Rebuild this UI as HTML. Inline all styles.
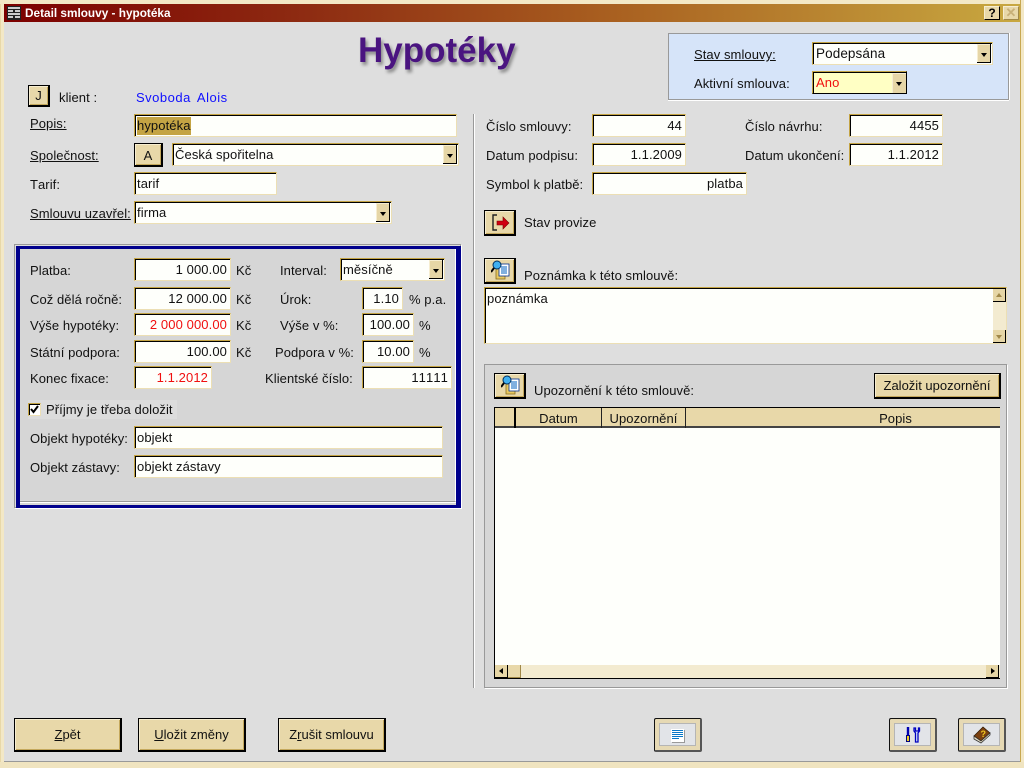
<!DOCTYPE html>
<html lang="cs"><head><meta charset="utf-8"><title>Detail smlouvy - hypotéka</title>
<style>
html,body{margin:0;padding:0;width:1024px;height:768px;overflow:hidden;background:#dedede}
*{box-sizing:border-box}
body{font:13px/16px "Liberation Sans",Arial,sans-serif;color:#111;position:relative;font-kerning:none}
.a,.l,.f,.b,.ib{position:absolute}
.l{white-space:nowrap;height:16px;margin-top:1px;letter-spacing:.07px}
.f{background:#fefffb;border:1px solid;border-color:#c4a444 #ecdfb4 #ecdfb4 #c4a444;box-shadow:inset 1px 1px 0 #000;padding:3px 2px 0 2px;white-space:nowrap;overflow:hidden;line-height:16px;letter-spacing:.1px}
.r{text-align:right;padding-right:3px}
.red{color:#f00f0f}
.b{background:#e8d8a9;border:1px solid #000;border-right-width:2px;border-bottom-width:2px;box-shadow:inset 1px 1px 0 #f6edd0,inset -1px -1px 0 #c4a85c;text-align:center;color:#111}
.dd{position:absolute;top:1px;right:1px;bottom:1px;width:14px;background:#e6d6a6;border-right:1px solid #000;border-bottom:1px solid #000;box-shadow:inset 1px 1px 0 #f6edd0}
.dd:after{content:"";position:absolute;left:4px;top:9px;border:3px solid transparent;border-top:4px solid #000;border-bottom:0}
.ib{width:48px;height:34px;background:#e2e4e8;border:1px solid #111;border-right:2px solid #555;border-bottom:2px solid #555;border-radius:2px;box-shadow:inset 0 0 0 4px #e6d9b4,inset 0 0 0 5px #b5b5b5}
u{text-decoration:underline}
</style></head><body>
<!-- frame -->
<div class="a" style="left:0;top:0;width:4px;height:768px;background:#f3e8c6;border-left:1px solid #e8d8a8"></div>
<div class="a" style="left:0;top:0;width:1024px;height:4px;background:#f3e8c6"></div>
<div class="a" style="left:1020px;top:0;width:4px;height:768px;background:#f3e8c6;border-left:1px solid #c8a850"></div>
<div class="a" style="left:0;top:762px;width:1024px;height:6px;background:#f0e4c0"></div>
<div class="a" style="left:4px;top:761px;width:1016px;height:1px;background:#999"></div>
<!-- title bar -->
<div class="a" style="left:4px;top:4px;width:1016px;height:18px;background:linear-gradient(90deg,#7c0000 0%,#8e2c12 30%,#a96020 60%,#c8a840 100%)"></div>
<svg class="a" style="left:7px;top:6px" width="14" height="14" viewBox="0 0 14 14"><rect width="14" height="14" fill="#222"/><path d="M1 2h12M1 5h5M8 5h5M1 8h12M1 11h5M8 11h5" stroke="#ccc" stroke-width="2"/></svg>
<div class="l" style="left:25px;top:5px;margin:0;color:#fff;font-weight:bold;font-size:11.800px;letter-spacing:0">Detail smlouvy - hypotéka</div>
<div class="a" style="left:984px;top:6px;width:16px;height:14px;background:#e8d8a9;border:1px solid;border-color:#f6edd0 #000 #000 #f6edd0;font:bold 12px/12px 'Liberation Sans';text-align:center;color:#000">?</div>
<div class="a" style="left:1003px;top:6px;width:16px;height:14px;background:#e8d8a9;border:1px solid;border-color:#f6edd0 #a08848 #a08848 #f6edd0;font:bold 13px/11px 'Liberation Sans';text-align:center;color:#c8b078">✕</div>
<!-- heading -->
<div class="l" style="left:358px;top:30px;height:42px;margin:0;letter-spacing:0;font:bold 35px/42px 'Liberation Sans';color:#4a1480;text-shadow:2px 3px 3px #8a8a8a">Hypotéky</div>
<!-- state panel -->
<div class="a" style="left:668px;top:33px;width:341px;height:67px;background:#d6e4f9;border:1px solid #999;box-shadow:0 1px 0 #fff,1px 0 0 #fff"></div>
<div class="l" style="left:694px;top:46px"><u>Stav smlouvy:</u></div>
<div class="f" style="left:812px;top:42px;width:181px;height:23px;font-size:13.500px;padding-left:3px">Podepsána<span class="dd"></span></div>
<div class="l" style="left:694px;top:75px">Aktivní smlouva:</div>
<div class="f red" style="left:812px;top:71px;width:95px;height:23px;background:#ffffc4;border-color:#c4a444 #000 #000 #c4a444;padding-left:3px">Ano<span class="dd" style="top:1px;right:0;bottom:0;border:0"></span></div>
<!-- left top -->
<div class="b" style="left:28px;top:85px;width:22px;height:22px;line-height:20px">J</div>
<div class="l" style="left:59px;top:89px">klient :</div>
<div class="l" style="left:136px;top:89px;color:#0f0fff;letter-spacing:.5px;word-spacing:2px">Svoboda Alois</div>
<div class="l" style="left:30px;top:115px"><u>Popis:</u></div>
<div class="f" style="left:134px;top:114px;width:323px;height:23px"><span style="background:#c4a444;padding:1px 0 2px">hypotéka</span></div>
<div class="l" style="left:30px;top:147px"><u>Společnost:</u></div>
<div class="b" style="left:134px;top:143px;width:29px;height:24px;line-height:23px">A</div>
<div class="f" style="left:172px;top:143px;width:287px;height:23px">Česká spořitelna<span class="dd"></span></div>
<div class="l" style="left:30px;top:176px">Tarif:</div>
<div class="f" style="left:134px;top:172px;width:143px;height:23px">tarif</div>
<div class="l" style="left:30px;top:205px"><u>Smlouvu uzavřel:</u></div>
<div class="f" style="left:134px;top:201px;width:258px;height:23px">firma<span class="dd"></span></div>
<!-- left panel -->
<div class="a" style="left:14px;top:244px;width:447px;height:264px;border:1px solid #999;box-shadow:1px 1px 0 #fff"></div>
<div class="a" style="left:16px;top:246px;width:445px;height:262px;border:solid #00008c;border-width:3px 5px 3px 4px;background:#d6d6d6"></div>
<div class="a" style="left:20px;top:249px;width:436px;height:253px;border-right:1px solid #fff;border-bottom:1px solid #999;box-shadow:0 1px 0 #fff"></div>

<div class="l" style="left:30px;top:262px">Platba:</div>
<div class="f r" style="left:134px;top:258px;width:97px;height:23px">1 000.00</div>
<div class="l" style="left:236px;top:262px">Kč</div>
<div class="l" style="left:280px;top:262px">Interval:</div>
<div class="f" style="left:340px;top:258px;width:105px;height:23px;border-color:#c4a444 #ecdfb4 #ecdfb4 #c4a444">měsíčně<span class="dd"></span></div>

<div class="l" style="left:30px;top:291px">Což dělá ročně:</div>
<div class="f r" style="left:134px;top:287px;width:97px;height:23px">12 000.00</div>
<div class="l" style="left:236px;top:291px">Kč</div>
<div class="l" style="left:280px;top:291px">Úrok:</div>
<div class="f r" style="left:362px;top:287px;width:41px;height:23px">1.10</div>
<div class="l" style="left:409px;top:291px">% p.a.</div>

<div class="l" style="left:30px;top:317px">Výše hypotéky:</div>
<div class="f r red" style="left:134px;top:313px;width:97px;height:23px">2 000 000.00</div>
<div class="l" style="left:236px;top:317px">Kč</div>
<div class="l" style="left:280px;top:317px">Výše v %:</div>
<div class="f r" style="left:362px;top:313px;width:52px;height:23px">100.00</div>
<div class="l" style="left:419px;top:317px">%</div>

<div class="l" style="left:30px;top:344px">Státní podpora:</div>
<div class="f r" style="left:134px;top:340px;width:97px;height:23px">100.00</div>
<div class="l" style="left:236px;top:344px">Kč</div>
<div class="l" style="left:275px;top:344px">Podpora v %:</div>
<div class="f r" style="left:362px;top:340px;width:52px;height:23px">10.00</div>
<div class="l" style="left:419px;top:344px">%</div>

<div class="l" style="left:30px;top:370px">Konec fixace:</div>
<div class="f r red" style="left:134px;top:366px;width:78px;height:23px">1.1.2012</div>
<div class="l" style="left:265px;top:370px">Klientské číslo:</div>
<div class="f r" style="left:362px;top:366px;width:90px;height:23px">11111</div>

<div class="a" style="left:28px;top:400px;width:149px;height:19px;background:#dcdcdc"></div>
<div class="a" style="left:28px;top:403px;width:13px;height:13px;background:#fff;border:1px solid;border-color:#c4a444 #ecdfb4 #ecdfb4 #c4a444;box-shadow:inset 1px 1px 0 #000"></div>
<svg class="a" style="left:30px;top:405px" width="9" height="9" viewBox="0 0 9 9"><path d="M1 4l2.500 3L8 1" fill="none" stroke="#000" stroke-width="2"/></svg>
<div class="l" style="left:46px;top:401px">Příjmy je třeba doložit</div>
<div class="l" style="left:30px;top:430px">Objekt hypotéky:</div>
<div class="f" style="left:134px;top:426px;width:309px;height:23px">objekt</div>
<div class="l" style="left:30px;top:459px">Objekt zástavy:</div>
<div class="f" style="left:134px;top:455px;width:309px;height:23px">objekt zástavy</div>

<!-- divider -->
<div class="a" style="left:473px;top:114px;width:2px;height:574px;background:#999;border-right:1px solid #fff"></div>

<!-- right fields -->
<div class="l" style="left:486px;top:118px">Číslo smlouvy:</div>
<div class="f r" style="left:592px;top:114px;width:94px;height:23px">44</div>
<div class="l" style="left:745px;top:118px">Číslo návrhu:</div>
<div class="f r" style="left:849px;top:114px;width:94px;height:23px">4455</div>
<div class="l" style="left:486px;top:147px">Datum podpisu:</div>
<div class="f r" style="left:592px;top:143px;width:94px;height:23px">1.1.2009</div>
<div class="l" style="left:745px;top:147px">Datum ukončení:</div>
<div class="f r" style="left:849px;top:143px;width:94px;height:23px">1.1.2012</div>
<div class="l" style="left:486px;top:176px">Symbol k platbě:</div>
<div class="f r" style="left:592px;top:172px;width:155px;height:23px">platba</div>

<div class="b" style="left:484px;top:210px;width:32px;height:26px"></div>
<svg class="a" style="left:491px;top:214px" width="20" height="18" viewBox="0 0 20 18"><path d="M6 1H2v15h4" fill="none" stroke="#222" stroke-width="1.400"/><path d="M6 7h6V3l6 6-6 6v-4H6z" fill="#d00010" stroke="#700" stroke-width=".6"/></svg>
<div class="l" style="left:524px;top:214px">Stav provize</div>

<div class="b" style="left:484px;top:258px;width:32px;height:26px"></div>
<svg class="a" style="left:491px;top:260px" width="20" height="21" viewBox="0 0 20 21"><rect x="5" y="8" width="9" height="11" fill="#e8c860" stroke="#8a7020" stroke-width=".8"/><rect x="8" y="4" width="10" height="12" fill="#fff" stroke="#003090" stroke-width=".8"/><path d="M10 7h6M10 9h6M10 11h6M10 13h6" stroke="#0060c0"/><circle cx="6" cy="5" r="4" fill="#40b0f0" stroke="#003060" stroke-width="1"/><path d="M3 8l-3 4" stroke="#000" stroke-width="2"/></svg>
<div class="l" style="left:524px;top:267px">Poznámka k této smlouvě:</div>
<div class="f" style="left:484px;top:287px;width:523px;height:57px">poznámka</div>
<div class="a" style="left:993px;top:289px;width:13px;height:54px;background:#f3ebd0"></div>
<div class="a" style="left:993px;top:289px;width:13px;height:13px;background:#e6d6a6;border-right:1px solid #000;border-bottom:1px solid #000"></div>
<div class="a" style="left:996px;top:293px;border:3px solid transparent;border-bottom:4px solid #a08848;border-top:0"></div>
<div class="a" style="left:993px;top:330px;width:13px;height:13px;background:#e6d6a6;border-right:1px solid #000;border-bottom:1px solid #000"></div>
<div class="a" style="left:996px;top:335px;border:3px solid transparent;border-top:4px solid #a08848;border-bottom:0"></div>

<!-- lower panel -->
<div class="a" style="left:484px;top:364px;width:523px;height:324px;background:#d6d6d6;border:1px solid #999;box-shadow:1px 1px 0 #fff"></div>
<div class="b" style="left:494px;top:373px;width:32px;height:26px"></div>
<svg class="a" style="left:501px;top:375px" width="20" height="21" viewBox="0 0 20 21"><rect x="5" y="8" width="9" height="11" fill="#e8c860" stroke="#8a7020" stroke-width=".8"/><rect x="8" y="4" width="10" height="12" fill="#fff" stroke="#003090" stroke-width=".8"/><path d="M10 7h6M10 9h6M10 11h6M10 13h6" stroke="#0060c0"/><circle cx="6" cy="5" r="4" fill="#40b0f0" stroke="#003060" stroke-width="1"/><path d="M3 8l-3 4" stroke="#000" stroke-width="2"/></svg>
<div class="l" style="left:534px;top:382px">Upozornění k této smlouvě:</div>
<div class="b" style="left:874px;top:373px;width:127px;height:26px;line-height:24px">Založit upozornění</div>

<div class="a" style="left:494px;top:407px;width:506px;height:272px;background:#fefffb;border:1px solid #000;border-right:0"></div>
<div class="a" style="left:495px;top:408px;width:505px;height:20px;background:#e8d8a9;border-bottom:2px solid #444"></div>
<div class="a" style="left:514px;top:408px;width:2px;height:20px;background:#000"></div>
<div class="a" style="left:601px;top:408px;width:1px;height:20px;background:#222"></div>
<div class="a" style="left:685px;top:408px;width:1px;height:20px;background:#222"></div>
<div class="l" style="left:516px;top:410px;width:85px;text-align:center">Datum</div>
<div class="l" style="left:602px;top:410px;width:83px;text-align:center">Upozornění</div>
<div class="l" style="left:686px;top:410px;width:314px;text-align:center;padding-left:105px">Popis</div>
<div class="a" style="left:495px;top:665px;width:505px;height:13px;background:#f3ebd0"></div>
<div class="a" style="left:495px;top:665px;width:13px;height:13px;background:#e6d6a6;border-right:1px solid #000;border-bottom:1px solid #000"></div>
<div class="a" style="left:499px;top:668px;border:3px solid transparent;border-right:4px solid #000;border-left:0"></div>
<div class="a" style="left:508px;top:665px;width:13px;height:13px;background:#e8d8a9;border-right:1px solid #a08848;border-bottom:1px solid #a08848"></div>
<div class="a" style="left:986px;top:665px;width:13px;height:13px;background:#e6d6a6;border-right:1px solid #000;border-bottom:1px solid #000"></div>
<div class="a" style="left:991px;top:668px;border:3px solid transparent;border-left:4px solid #000;border-right:0"></div>

<!-- bottom buttons -->
<div class="b" style="left:14px;top:718px;width:108px;height:34px;line-height:32px"><u>Z</u>pět</div>
<div class="b" style="left:138px;top:718px;width:108px;height:34px;line-height:32px"><u>U</u>ložit změny</div>
<div class="b" style="left:278px;top:718px;width:108px;height:34px;line-height:32px">Z<u>r</u>ušit smlouvu</div>

<div class="ib" style="left:654px;top:718px"></div>
<svg class="a" style="left:671px;top:729px" width="14" height="14" viewBox="0 0 14 14"><rect x="1" y="1" width="13" height="13" fill="#999"/><rect width="13" height="13" fill="#fff"/><path d="M1 1.500h11M1 3.500h11M1 5.500h11M1 7.500h11M1 9.500h7" stroke="#0878c8" stroke-width="1"/></svg>
<div class="ib" style="left:889px;top:718px"></div>
<svg class="a" style="left:905px;top:726px" width="16" height="18" viewBox="0 0 16 18"><path d="M3 1v8" stroke="#0000b0" stroke-width="2.400"/><path d="M3 9v7" stroke="#000080" stroke-width="4"/><path d="M3 10v5" stroke="#f0d020" stroke-width="2"/><path d="M9 2v3l1.500 2v9h2.500V7L14.500 5V2l-1 0v3h-3V2z" fill="#d8e8f8" stroke="#0000c0" stroke-width="1.300"/></svg>
<div class="ib" style="left:958px;top:718px"></div>
<svg class="a" style="left:972px;top:726px" width="20" height="18" viewBox="0 0 20 18"><path d="M2 10L11 1l7 6-9 8z" fill="#7a4010" stroke="#301800" stroke-width=".8"/><path d="M2 10v3l7 4 9-8V7l-9 8z" fill="#e8e0c8" stroke="#333" stroke-width=".8"/><text x="8.500" y="11" font-family="Liberation Sans" font-weight="bold" font-size="9" fill="#f0c820">?</text></svg>
</body></html>
